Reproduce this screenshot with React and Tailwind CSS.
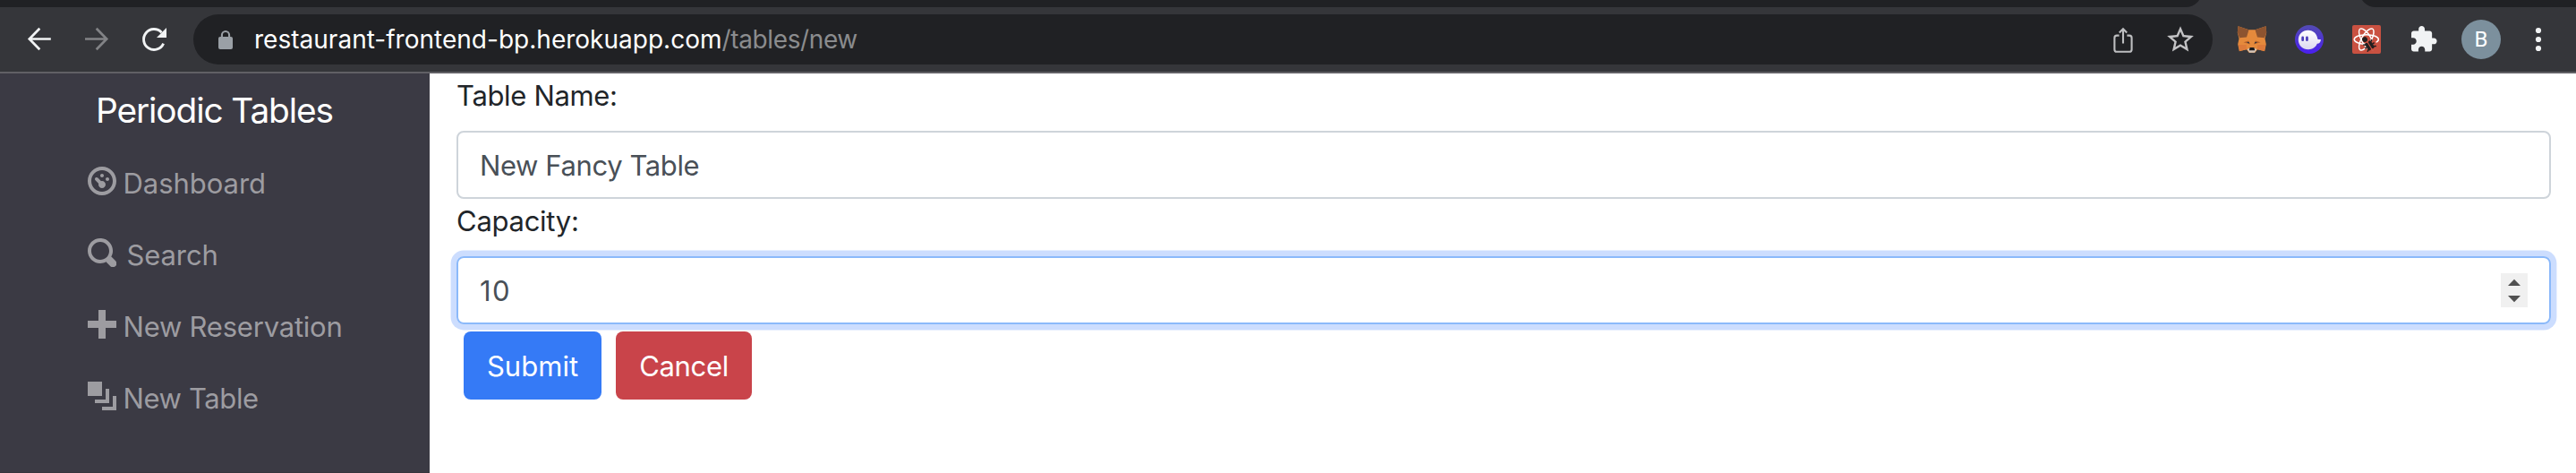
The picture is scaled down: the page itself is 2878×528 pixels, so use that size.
import React from "react";

function Icon({ children, className = "" }) {
  return (
    <svg viewBox="0 0 40 40" className={`size-10 shrink-0 ${className}`} fill="none">
      {children}
    </svg>
  );
}

function TabStrip() {
  return (
    <div className="flex h-2 justify-between overflow-hidden bg-[#35363a]">
      <div className="-mt-3 h-5 w-[2460px] rounded-br-[18px] bg-[#202124]" />
      <div className="-mt-3 h-5 w-[242px] rounded-bl-[18px] bg-[#202124]" />
    </div>
  );
}

function AddressBar() {
  return (
    <div className="flex h-14 flex-1 items-center rounded-full bg-[#202124] px-4">
      <Icon>
        <rect x="12" y="17" width="16" height="14" rx="2" fill="#9aa0a6" />
        <path d="M15.9 17.5v-2.4a4.1 4.1 0 0 1 8.2 0v2.4" stroke="#9aa0a6" strokeWidth="2.1" />
      </Icon>
      <div className="ml-3 flex-1 text-[28px] leading-10 whitespace-pre text-white">
        <span className="tracking-[0.015px]">restaurant-frontend-bp.herokuapp.com</span>
        <span className="tracking-[-0.38px] text-[#8b8c8e]">/tables/new</span>
      </div>
      <div className="flex gap-6">
        <Icon>
          <path d="M15.600 15.600H13a2.600 2.600 0 0 0-2.600 2.600v13a2.600 2.600 0 0 0 2.600 2.600h14a2.600 2.600 0 0 0 2.600-2.600v-13a2.600 2.600 0 0 0-2.600-2.600h-2.600M20 24.500V8.200M15.800 12.400l4.200-4.200 4.200 4.200" stroke="#bdbec0" strokeWidth="2.100" />
        </Icon>
        <Icon>
          <path transform="translate(2.200 2.300) scale(1.485)" fill="#c3c3c5" d="M22 9.240l-7.190-.62L12 2 9.190 8.630 2 9.240l5.460 4.730L5.820 21 12 17.270 18.180 21l-1.630-7.030L22 9.240zM12 15.400l-3.760 2.270 1-4.280-3.320-2.880 4.380-.38L12 6.100l1.710 4.040 4.380.38-3.320 2.880 1 4.280L12 15.400z" />
        </Icon>
      </div>
    </div>
  );
}

function Extensions() {
  return (
    <>
      <Icon>
        <path d="M4.500 5.200l12 4h7l12-4 .7 7-1.700 7 1.300 6-1.600 8-8.200-2-2.600 3.500h-6.800l-2.600-3.500-8.200 2-1.600-8 1.300-6-1.700-7z" fill="#e58a3c" />
        <path d="M4.500 5.200l12 4-2.500 8.300-8 .8-2.200-6zM35.500 5.200l-12 4 2.500 8.300 8 .8 2.200-6z" fill="#8d5430" />
        <path d="M4.700 26h9l.5 5-8 2zM35.300 26h-9l-.5 5 8 2z" fill="#dd7a3a" />
        <path d="M10.500 23.300l5.500-1.800 2 4zM29.500 23.300l-5.500-1.800-2 4z" fill="#b5602b" />
        <path d="M14 23.300l2.600-.6.6 2zM26 23.300l-2.600-.6-.6 2z" fill="#2f343b" />
        <path d="M14.500 31l2.500-1h6l2.500 1-2.700 3.800h-5.600z" fill="#d3c5b8" />
        <path d="M17.600 29h4.800l.8 3.200h-6.400z" fill="#1c1b1d" />
      </Icon>
      <Icon>
        <defs>
          <linearGradient id="ghostBadge" x1="0" y1="0" x2="0" y2="1">
            <stop offset="0" stopColor="#534bb1" />
            <stop offset="1" stopColor="#4a1ff0" />
          </linearGradient>
          <linearGradient id="ghostBody" x1="0" y1="0" x2="0" y2="1">
            <stop offset="0" stopColor="#ffffff" />
            <stop offset="1" stopColor="#dcd8f0" />
          </linearGradient>
        </defs>
        <circle cx="20" cy="20" r="16" fill="url(#ghostBadge)" />
        <path d="M7.800 20.500C7.800 14 12.700 9.700 18.600 9.700c6 0 10.200 4.300 10.700 9.800.5.6 2 .7 3.600.4 0 3-1.600 4.600-4.100 4.900C27.200 28.800 23.400 31.200 19 31.200c-6.300 0-11.200-4.400-11.200-10.700z" fill="url(#ghostBody)" />
        <rect x="11.300" y="16.600" width="2.700" height="5.400" rx="1.350" fill="#4a3bb8" />
        <rect x="16.100" y="16.600" width="2.700" height="5.400" rx="1.350" fill="#4a3bb8" />
      </Icon>
      <Icon>
        <rect x="4" y="4" width="32" height="32" rx="2" fill="#c95141" />
        <g stroke="#ffffff" strokeWidth="1.500">
          <ellipse cx="19.800" cy="20" rx="13.600" ry="5.300" />
          <ellipse cx="19.800" cy="20" rx="13.600" ry="5.300" transform="rotate(60 19.800 20)" />
          <ellipse cx="19.800" cy="20" rx="13.600" ry="5.300" transform="rotate(120 19.800 20)" />
        </g>
        <path d="M18.500 25l11-5.500 3 10-9.500 5.500z" fill="#c95141" />
        <g transform="rotate(-32 23 26)" fill="#221f1f">
          <circle cx="22" cy="18.300" r="2.900" />
          <rect x="19" y="22.300" width="3.300" height="9.400" rx="1.300" />
          <rect x="23.500" y="22.300" width="3.300" height="9.400" rx="1.300" />
          <path d="M19.500 24l-2.300-1.500M19.500 27h-2.600M19.500 30l-2.300 1.500M26.500 24l2.300-1.500M26.500 27h2.600M26.500 30l2.300 1.500" stroke="#221f1f" strokeWidth="1.500" />
        </g>
      </Icon>
      <Icon className="text-[#f1f3f4]">
        <path transform="translate(3.300 3.600) scale(1.360)" fill="currentColor" d="M20.500 11H19V7c0-1.100-.9-2-2-2h-4V3.500C13 2.120 11.880 1 10.500 1S8 2.120 8 3.500V5H4c-1.100 0-1.990.9-1.990 2v3.800H3.500c1.490 0 2.700 1.210 2.700 2.700s-1.210 2.700-2.700 2.700H2V20c0 1.100.9 2 2 2h3.800v-1.500c0-1.490 1.210-2.700 2.700-2.700 1.490 0 2.700 1.210 2.700 2.700V22H17c1.100 0 2-.9 2-2v-4h1.500c1.380 0 2.500-1.120 2.500-2.500S21.880 11 20.500 11z" />
      </Icon>
    </>
  );
}

function Toolbar() {
  return (
    <div className="flex h-[74px] items-center gap-6 border-b-2 border-[#616065] bg-[#35363a] pr-[22px] pl-6">
      <Icon>
        <path d="M32.800 19.500H8.800M20.300 7.700L8.800 19.500l11.500 11.800" stroke="#f1f3f4" strokeWidth="2.700" />
      </Icon>
      <Icon>
        <path d="M7 19.500h24.200M19.700 7.700l11.500 11.800-11.500 11.800" stroke="#828386" strokeWidth="2.700" />
      </Icon>
      <Icon>
        <path d="M30.600 24.600A11.500 11.500 0 1 1 28.500 12.200" stroke="#f1f3f4" strokeWidth="2.900" />
        <path d="M34 7v11H23z" fill="#f1f3f4" />
      </Icon>
      <AddressBar />
      <Extensions />
      <div className="-mx-0.5 flex size-11 items-center justify-center rounded-full bg-[#7c909d] font-[Roboto,sans-serif] text-2xl text-white">
        B
      </div>
      <Icon>
        <circle cx="20" cy="10" r="3.100" fill="#f1f3f4" />
        <circle cx="20" cy="20" r="3.100" fill="#f1f3f4" />
        <circle cx="20" cy="30" r="3.100" fill="#f1f3f4" />
      </Icon>
    </div>
  );
}

function NavItem({ path, label, className }) {
  return (
    <a className="flex h-20 items-center">
      <svg viewBox="0 0 8 8" className="mb-1.5 size-8" fill="currentColor">
        <path d={path} />
      </svg>
      <span className={className}>{label}</span>
    </a>
  );
}

function Sidebar() {
  return (
    <aside className="flex w-[480px] flex-col border-b border-[#35343c] bg-[#3b3a44] pl-[98px] text-[31px] text-[#9d9ca1]">
      <h1 className="mt-[17px] mb-[18px] ml-[9px] text-[38.8px] leading-[48px] tracking-[-1.11px] text-white">Periodic Tables</h1>
      <nav>
        <NavItem
          label="Dashboard"
          className="ml-[7.5px] tracking-[-0.05px]"
          path="M4 0c-2.200 0-4 1.800-4 4s1.800 4 4 4 4-1.800 4-4-1.800-4-4-4zm0 1c1.660 0 3 1.340 3 3s-1.340 3-3 3-3-1.340-3-3 1.340-3 3-3zm0 1c-.28 0-.5.22-.5.5s.22.5.5.5.5-.22.5-.5-.22-.5-.5-.5zm-1.660 1a.5.5 0 0 0-.19.84l.91.910c-.02.08-.06.16-.06.25 0 .55.45 1 1 1s1-.45 1-1-.45-1-1-1c-.09 0-.17.04-.25.060l-.91-.91a.5.5 0 0 0-.44-.16.5.5 0 0 0-.06 0zm3.160 0c-.28 0-.5.22-.5.5s.22.5.5.5.5-.22.5-.5-.22-.5-.5-.5z"
        />
        <NavItem
          label="Search"
          className="ml-[11.5px] tracking-[-0.1px]"
          path="M3.500 0c-1.930 0-3.500 1.570-3.500 3.500s1.570 3.500 3.500 3.500c.59 0 1.170-.14 1.660-.41a1 1 0 0 0 .13.130l1 1a1.020 1.020 0 1 0 1.440-1.440l-1-1a1 1 0 0 0-.16-.13c.27-.49.44-1.060.44-1.660 0-1.930-1.550-3.500-3.500-3.500zm0 1c1.390 0 2.500 1.110 2.500 2.500 0 .66-.24 1.270-.66 1.720-.01.010-.02.020-.03.030a1 1 0 0 0-.13.130c-.44.4-1.040.63-1.690.630-1.390 0-2.500-1.110-2.500-2.500s1.110-2.500 2.500-2.500z"
        />
        <NavItem
          label="New Reservation"
          className="ml-[7.5px] tracking-[-0.22px]"
          path="M3 0v3h-3v2h3v3h2v-3h3v-2h-3v-3h-2z"
        />
        <NavItem
          label="New Table"
          className="ml-[7.5px] tracking-[-0.387px]"
          path="M0 0v4h4v-4h-4zm5 2v3h-3v1h4v-4h-1zm2 2v3h-3v1h4v-4h-1z"
        />
      </nav>
    </aside>
  );
}

function TableForm() {
  return (
    <main className="flex flex-1 flex-col bg-white pr-7 pl-[30px] text-[31px] leading-[48px] text-[#212529]">
      <label className="mb-[15px] pt-px tracking-[-0.342px]">Table Name:</label>
      <div className="flex h-[76px] items-center rounded-lg border-2 border-[#ced4da] px-6 pt-0.5 tracking-[-0.4px] text-[#495057]">
        New Fancy Table
      </div>
      <label className="mb-[15px] pt-px tracking-[-0.266px]">Capacity:</label>
      <div className="flex h-[76px] items-center justify-between rounded-lg border-2 border-[#8bb9fa] px-6 text-[#495057] shadow-[0_0_0_6.4px_#ccddfe]">
        <span className="pt-0.5 tracking-[1.39px]">10</span>
        <svg viewBox="0 0 30 38" className="h-[38px] w-[30px]">
          <rect width="30" height="38" fill="#f0f0f0" />
          <path d="M8 14l7-7.300L22 14zM8 25l7 7.300L22 25z" fill="#505050" />
        </svg>
      </div>
      <div className="mt-2 ml-2 flex gap-4 text-white">
        <button className="h-[76px] w-[154px] rounded-lg bg-[#357af6] pt-0.5 tracking-[0.03px]">Submit</button>
        <button className="h-[76px] w-[152px] rounded-lg bg-[#c9444a] pt-0.5 tracking-[-0.33px]">Cancel</button>
      </div>
    </main>
  );
}

export default function App() {
  return (
    <div className="flex h-[528px] w-[2878px] flex-col overflow-hidden font-[Inter,sans-serif]">
      <TabStrip />
      <Toolbar />
      <div className="flex flex-1">
        <Sidebar />
        <TableForm />
      </div>
    </div>
  );
}
